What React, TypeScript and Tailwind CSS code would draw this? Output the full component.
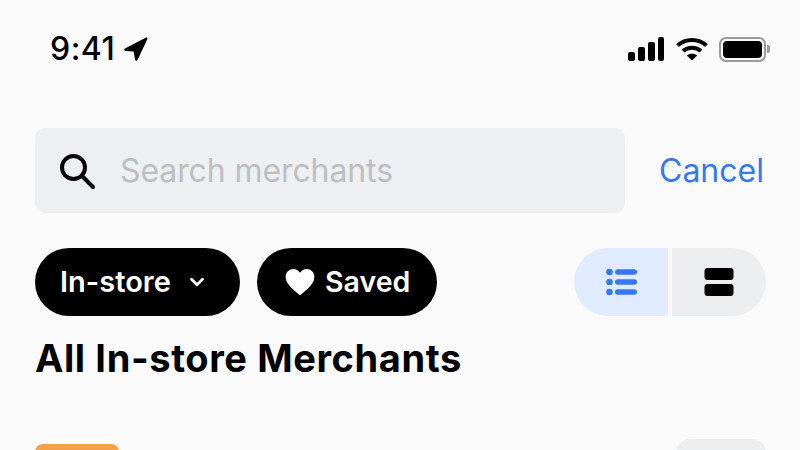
import { ChevronDown } from "lucide-react"

function StatusBar() {
  return (
    <div className="h-[128px] pl-[50px] pr-[30px] pt-[27px] flex items-start justify-between">
      <div className="flex items-center h-[44px] gap-[8px]">
        <span className="text-[32px] leading-[44px] font-medium text-black tracking-[0.5px] font-['Inter',sans-serif]">9:41</span>
        <svg width="26" height="26" viewBox="0 0 26 26" className="-mt-[1px]">
          <path d="M2 12.5 L23 1.6 Q25 1 24.4 3 L14.5 24 Q13 25.8 12 23.6 L10.6 15.6 L2.8 15 Q0 14 2 12.5 Z" fill="#000" />
        </svg>
      </div>
      <div className="flex items-center h-[44px]">
        <svg width="36" height="24" viewBox="0 0 36 24">
          <rect x="0" y="15" width="7" height="9" rx="2" fill="#000" />
          <rect x="10" y="10" width="7" height="14" rx="2" fill="#000" />
          <rect x="20" y="5" width="7" height="19" rx="2" fill="#000" />
          <rect x="30" y="0" width="6" height="24" rx="2" fill="#000" />
        </svg>
        <svg width="32" height="24" viewBox="0 0 32 24" fill="none" stroke="#000" strokeWidth="4" className="ml-[12px]">
          <path d="M1.5 8.5 C9.5 1 22.5 1 30.5 8.5" />
          <path d="M7 14 C12 9.5 20 9.5 25 14" />
          <path d="M16 23.5 L10.8 18.6 C13.5 16 18.5 16 21.2 18.6 Z" fill="#000" stroke="none" />
        </svg>
        <div className="flex items-center ml-[11px]">
          <div className="w-[47px] h-[25px] rounded-[7px] border-2 border-[#9a9a9a] p-[2px]">
            <div className="w-full h-full rounded-[4px] bg-black" />
          </div>
          <div className="w-[3px] h-[8px] ml-[1px] rounded-r-[2px] bg-[#9a9a9a]" />
        </div>
      </div>
    </div>
  )
}

function SearchRow() {
  return (
    <div className="flex items-center">
      <div className="w-[590px] shrink-0 h-[85px] rounded-[10px] bg-[#edeff0] flex items-center pl-[22px]">
        <svg width="40" height="40" viewBox="0 0 40 40" fill="none" stroke="#000" strokeWidth="4" strokeLinecap="round">
          <circle cx="16.5" cy="16.5" r="11.5" />
          <path d="M25 25 L36 36" />
        </svg>
        <span className="ml-[23px] text-[32px] text-[#bcbfc2] tracking-[-0.1px] font-['Inter',sans-serif]">Search merchants</span>
      </div>
      <span className="ml-[34px] text-[32px] text-[#3478f6] font-['Inter',sans-serif]">Cancel</span>
    </div>
  )
}

function FilterRow() {
  return (
    <div className="mt-[35px] flex items-center">
      <button className="w-[205px] h-[68px] rounded-full bg-black text-white flex items-center pl-[25px]">
        <span className="text-[29px] font-semibold font-['Inter',sans-serif]">In-store</span>
        <ChevronDown size={22} strokeWidth={3} className="ml-[15px]" />
      </button>
      <button className="ml-[17px] w-[180px] h-[68px] rounded-full bg-black text-white flex items-center pl-[28px]">
        <svg width="30" height="28" viewBox="0 0 24 22" fill="#fff">
          <path d="M12 21.5 C5 16 0.5 12 0.5 6.8 C0.5 3 3.4 0.5 6.6 0.5 C8.8 0.5 10.8 1.6 12 3.6 C13.2 1.6 15.2 0.5 17.4 0.5 C20.6 0.5 23.5 3 23.5 6.8 C23.5 12 19 16 12 21.5 Z" />
        </svg>
        <span className="ml-[10px] text-[28.5px] font-semibold font-['Inter',sans-serif]">Saved</span>
      </button>
      <div className="ml-auto flex gap-[4px]">
        <div className="w-[94px] h-[68px] rounded-l-full bg-[#e0ebff] flex items-center justify-center pl-[2px]">
          <svg width="32" height="28" viewBox="0 0 32 28" fill="#3478f6">
            <circle cx="3.5" cy="4" r="3.3" />
            <circle cx="3.5" cy="14" r="3.3" />
            <circle cx="3.5" cy="24" r="3.3" />
            <rect x="9" y="1.2" width="22" height="5.6" rx="2.8" />
            <rect x="9" y="11.2" width="22" height="5.6" rx="2.8" />
            <rect x="9" y="21.2" width="22" height="5.6" rx="2.8" />
          </svg>
        </div>
        <div className="w-[94px] h-[68px] rounded-r-full bg-[#eceeef] flex items-center justify-center">
          <svg width="30" height="28" viewBox="0 0 30 28" fill="#000">
            <rect x="0.5" y="0" width="29" height="12" rx="3" />
            <rect x="0.5" y="16" width="29" height="12" rx="3" />
          </svg>
        </div>
      </div>
    </div>
  )
}

export default function App() {
  return (
    <div className="w-[800px] h-[450px] overflow-hidden bg-[#fafafa]">
      <StatusBar />
      <div className="pl-[35px] pr-[34px]">
        <SearchRow />
        <FilterRow />
        <h1 className="mt-[18px] text-[38px] leading-[48px] font-bold text-black tracking-[0.6px] whitespace-nowrap font-['Inter',sans-serif]">
          All In-store Merchants
        </h1>
        <div className="mt-[57px] flex items-start justify-between">
          <div className="mt-[5px] w-[84px] h-[40px] rounded-[8px] bg-[#f4a24a]" />
          <div className="w-[90px] h-[40px] rounded-[14px] bg-[#eceeef]" />
        </div>
      </div>
    </div>
  )
}
